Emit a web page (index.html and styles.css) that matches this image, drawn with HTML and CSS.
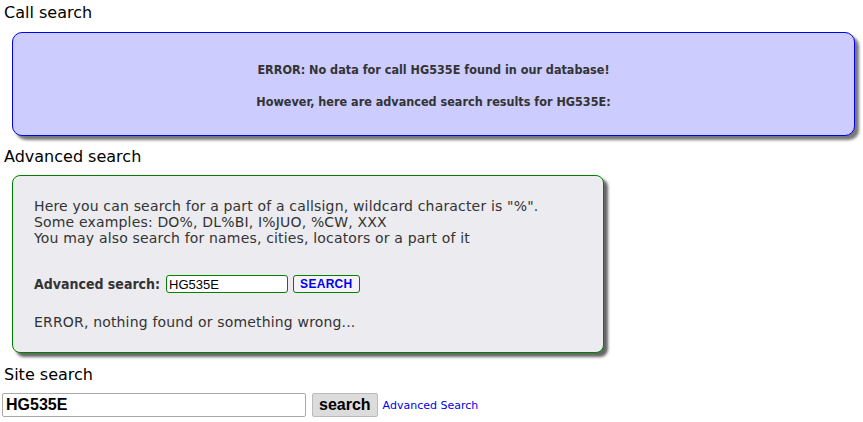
FILE: index.html
```html
<!DOCTYPE html>
<html lang="en">
<head>
  <meta charset="UTF-8">
  <title>Call search</title>
  <link rel="stylesheet" href="styles.css">
</head>
<body>
  <h3 class="title">Call search</h3>
  <div class="notice">
    <p>ERROR: No data for call HG535E found in our database!</p>
    <p>However, here are advanced search results for HG535E:</p>
  </div>

  <h3 class="title">Advanced search</h3>
  <div class="advanced">
    <p>Here you can search for a part of a callsign, wildcard character is "%".<br>
    Some examples: DO%, DL%BI, I%JUO, %CW, XXX<br>
    You may also search for names, cities, locators or a part of it</p>
    <form class="adv-form">
      <label for="advcall">Advanced search:</label>
      <input type="text" id="advcall" value="HG535E">
      <button type="button">SEARCH</button>
    </form>
    <p>ERROR, nothing found or something wrong...</p>
  </div>

  <h3 class="title">Site search</h3>
  <form class="site-form">
    <input type="text" id="sitecall" value="HG535E">
    <button type="button">search</button>
    <a href="#">Advanced Search</a>
  </form>
</body>
</html>
```

FILE: styles.css
```css
body {
  margin: 0;
  padding: 2px 4px;
  font-family: "DejaVu Sans", Verdana, sans-serif;
  font-size: 14px;
  color: #333;
  background: #fff;
}
.title {
  font-size: 16px;
  font-weight: normal;
  color: #000;
  margin: 0;
  line-height: 22px;
}
.notice {
  margin: 8px 4px 10px 8px;
  height: 101px;
  border: 1px solid #0000ee;
  border-radius: 10px;
  background: #ccccff;
  box-shadow: 4px 4px 3px #777;
  text-align: center;
  font-family: "DejaVu Sans Condensed", "DejaVu Sans", sans-serif;
  font-weight: bold;
  font-size: 12.5px;
  padding-top: 1px;
}
.notice p {
  margin: 28px 0 0;
}
.notice p + p {
  margin-top: 17px;
}
.advanced {
  width: 548px;
  margin: 7px 0 11px 8px;
  padding: 12px 21px 12px;
  border: 1px solid #008000;
  border-radius: 8px;
  background: #ebebf0;
  box-shadow: 4px 4px 3px #666;
  line-height: 16px;
  letter-spacing: 0.17px;
}
.advanced p {
  margin: 10px 0;
}
.adv-form {
  display: flex;
  align-items: center;
  margin: 29px 0 21px;
}
.adv-form label {
  font-family: "DejaVu Sans Condensed", "DejaVu Sans", sans-serif;
  font-weight: bold;
  letter-spacing: 0;
  margin-right: 6px;
}
.adv-form input {
  width: 122px;
  height: 18px;
  padding: 0 2px;
  border: 1px solid #008000;
  border-radius: 3px;
  font-family: "Liberation Sans", Arial, sans-serif;
  font-size: 13px;
  letter-spacing: 0;
  color: #000;
  box-sizing: border-box;
}
.adv-form button {
  margin-left: 5px;
  height: 18px;
  padding: 0 6px;
  border: 1px solid #008000;
  border-radius: 3px;
  background: #f4f4f8;
  color: #0000ee;
  font-family: "Liberation Sans", Arial, sans-serif;
  font-weight: bold;
  font-size: 12px;
  letter-spacing: 0.3px;
}
.site-form {
  display: flex;
  align-items: center;
  margin-top: 7px;
}
.site-form input {
  width: 304px;
  height: 24px;
  margin-left: -2px;
  padding: 0 3px;
  border: 1px solid #aaa;
  border-radius: 2px;
  box-sizing: border-box;
  font-family: "Liberation Sans", Arial, sans-serif;
  font-weight: bold;
  font-size: 16px;
  color: #000;
}
.site-form button {
  margin-left: 6px;
  height: 24px;
  padding: 0 6px;
  border: 1px solid #bbb;
  border-radius: 2px;
  background: #dcdcdc;
  font-family: "Liberation Sans", Arial, sans-serif;
  font-weight: bold;
  font-size: 16px;
  color: #000;
}
.site-form a {
  margin-left: 5px;
  font-size: 11px;
  color: #0000ee;
  text-decoration: none;
}
```
